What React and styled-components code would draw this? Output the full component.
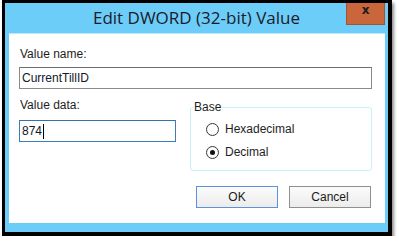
import React from 'react';
import styled, { createGlobalStyle } from 'styled-components';

const Global = createGlobalStyle`
  html, body {
    margin: 0;
    padding: 0;
    background: #fff;
  }
  body {
    font-family: "Liberation Sans", Arial, sans-serif;
    font-size: 12px;
    color: #1e1e1e;
  }
`;

const Frame = styled.div`
  box-sizing: border-box;
  width: 390px;
  height: 236px;
  margin-left: 2px;
  border: 3px solid #000;
  border-right-width: 4px;
  border-bottom-width: 4px;
  box-shadow: 2px 3px 3px rgba(0, 0, 0, 0.45);
  display: flex;
  flex-direction: column;
  background: #6ccdf8;
`;

const TitleBar = styled.div`
  height: 30px;
  display: flex;
  align-items: flex-start;
`;

const Title = styled.div`
  flex: 1;
  padding-left: 42px;
  text-align: center;
  font-family: "Open Sans", "Noto Sans", sans-serif;
  font-size: 17px;
  line-height: 30px;
  color: #1a1a2a;
`;

const CloseButton = styled.div`
  box-sizing: border-box;
  width: 39px;
  height: 22px;
  margin-right: 3px;
  background: #c9663b;
  border: 1px solid #a65230;
  border-top: none;
  display: flex;
  justify-content: center;
  align-items: flex-start;
  font-family: "DejaVu Sans", sans-serif;
  font-weight: bold;
  font-size: 12px;
  line-height: 14px;
  color: #1c1c1c;
`;

const Body = styled.div`
  flex: 1;
  padding: 0 3px 9px 4px;
  display: flex;
`;

const Content = styled.div`
  box-sizing: border-box;
  flex: 1;
  background: #fff;
  border-top: 1px solid #b9ebfc;
  padding: 13px 13px 0 10px;
  display: flex;
  flex-direction: column;
`;

const Label = styled.div`
  line-height: 15px;
  padding-left: 1px;
`;

const TextBox = styled.div`
  box-sizing: border-box;
  height: 22px;
  width: ${p => p.width || 'auto'};
  margin-top: ${p => p.top || 0}px;
  border: 1px solid ${p => (p.focused ? '#3c7db6' : '#8a8a8a')};
  border-top-color: ${p => (p.focused ? '#3572a8' : '#6e6e6e')};
  padding: 0 2px;
  display: flex;
  align-items: center;
  color: #10182a;
`;

const Caret = styled.span`
  display: inline-block;
  width: 1px;
  height: 15px;
  background: #000;
  margin-left: 1px;
`;

const Row = styled.div`
  display: flex;
  gap: 14px;
  margin-top: 9px;
`;

const Column = styled.div`
  display: flex;
  flex-direction: column;
`;

const GroupBox = styled.fieldset`
  box-sizing: border-box;
  width: 182px;
  margin: 2px 0 0;
  padding: 7px 0 10px 15px;
  border: 1px solid #c9f1fb;
  border-radius: 3px;
  display: flex;
  flex-direction: column;
  gap: 7px;
`;

const Legend = styled.legend`
  margin-left: -13px;
  padding: 0 1px;
  line-height: 14px;
`;

const RadioRow = styled.div`
  display: flex;
  align-items: center;
  height: 16px;
  gap: 6px;
`;

const RadioCircle = styled.span`
  box-sizing: border-box;
  width: 13px;
  height: 13px;
  border-radius: 50%;
  border: 1px solid #3a3a3a;
  background: radial-gradient(circle, #fff 55%, #e6e6e6);
  display: flex;
  justify-content: center;
  align-items: center;
  &::after {
    content: '';
    width: 5px;
    height: 5px;
    border-radius: 50%;
    background: ${p => (p.checked ? '#111' : 'transparent')};
  }
`;

const ButtonRow = styled.div`
  display: flex;
  justify-content: flex-end;
  gap: 11px;
  margin-top: 15px;
  padding-right: 1px;
`;

const Button = styled.div`
  box-sizing: border-box;
  width: 82px;
  height: 22px;
  border: 1px solid ${p => (p.primary ? '#5a93dc' : '#8f8f8f')};
  background: linear-gradient(#fbfbfb, #ececec);
  display: flex;
  justify-content: center;
  align-items: center;
  color: #1a1a1a;
`;

const Radio = ({ checked, children }) => (
  <RadioRow>
    <RadioCircle checked={checked} />
    <span>{children}</span>
  </RadioRow>
);

export default function App() {
  return (
    <>
      <Global />
      <Frame>
        <TitleBar>
          <Title>Edit DWORD (32-bit) Value</Title>
          <CloseButton>x</CloseButton>
        </TitleBar>
        <Body>
          <Content>
            <Label>Value name:</Label>
            <TextBox top={5}>CurrentTillID</TextBox>
            <Row>
              <Column>
                <Label>Value data:</Label>
                <TextBox top={7} width="157px" focused>
                  874<Caret />
                </TextBox>
              </Column>
              <GroupBox>
                <Legend>Base</Legend>
                <Radio>Hexadecimal</Radio>
                <Radio checked>Decimal</Radio>
              </GroupBox>
            </Row>
            <ButtonRow>
              <Button primary>OK</Button>
              <Button>Cancel</Button>
            </ButtonRow>
          </Content>
        </Body>
      </Frame>
    </>
  );
}
